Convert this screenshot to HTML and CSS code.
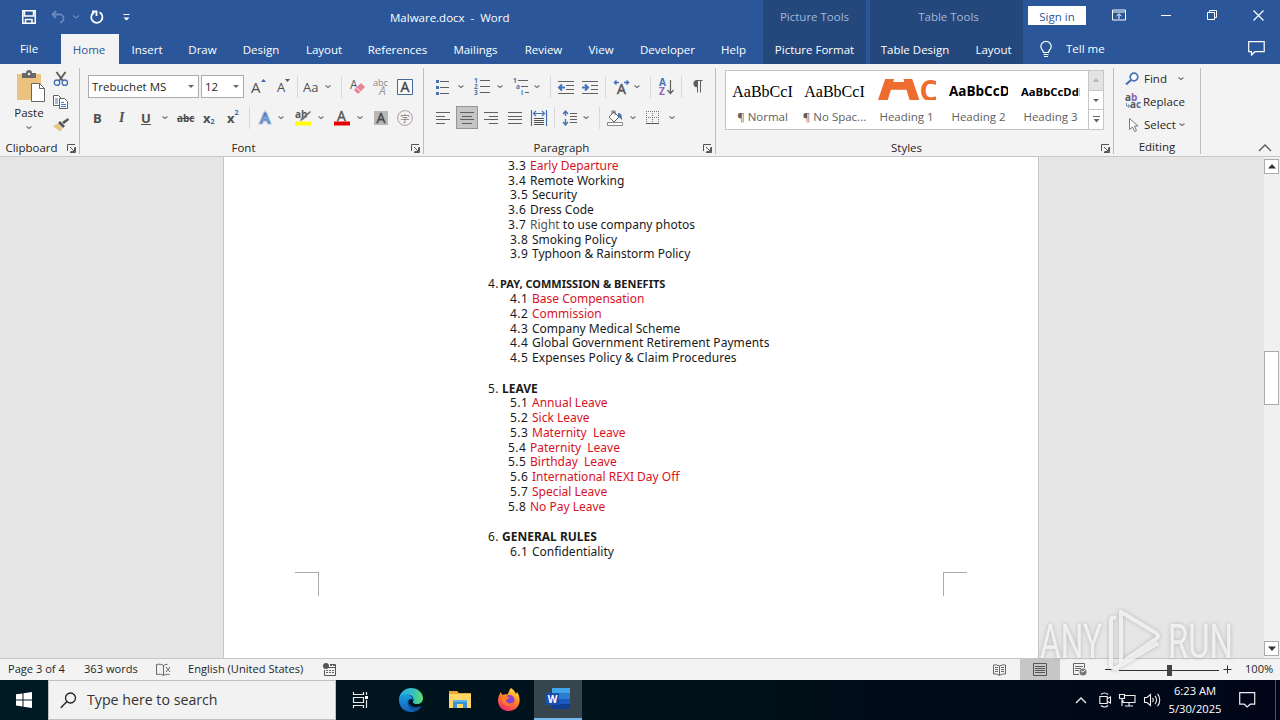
FILE: index.html
```html
<!DOCTYPE html>
<html lang="en">
<head>
    <meta charset="UTF-8">
    <title>Malware.docx - Word</title>
    <link rel="stylesheet" href="styles.css">
</head>
<body>
    <svg class="defs">
        <symbol id="chev" viewBox="0 0 8 6"><path d="M1.500 1.500l2.500 2 2.500-2" fill="none" stroke="#777" stroke-width="1.200"/></symbol>
        <symbol id="launch" viewBox="0 0 9 9"><path d="M.5 7V.5H8M3 3l4 4M7.5 3.5v4h-4M8.500 3v5.500H3" fill="none" stroke="#555"/></symbol>
    </svg>

    <header>
        <div class="head-main">
            <div class="titlebar">
                <svg width="14" height="14" viewBox="0 0 14 14"><path d="M.8.8h12.400v12.400H.8zM2.500 1v5h9V1M3.500 13V9.500h6.500V13" fill="none" stroke="#fff" stroke-width="1.500"/></svg>
                <svg class="faded" width="14" height="14" viewBox="0 0 14 14"><path d="M5 1L1.500 4.500 5 8M2 4.500h6a4 4 0 0 1 1 8" fill="none" stroke="#fff" stroke-width="1.800"/></svg>
                <svg class="faded" width="8" height="6"><path d="M1 1.500l3 2.500 3-2.500" fill="none" stroke="#fff" stroke-width="1.200"/></svg>
                <svg width="14" height="14" viewBox="0 0 14 14"><path d="M9.500 2.300A5.600 5.600 0 1 1 4 2.400M2 1.500h4.500V6" fill="none" stroke="#fff" stroke-width="1.800"/></svg>
                <svg width="7" height="7" viewBox="0 0 7 7"><path d="M.5 0h6v1h-6zM.5 3.500h6l-3 3z" fill="#fff"/></svg>
                <span class="doc-title">Malware.docx&nbsp; -&nbsp; Word</span>
            </div>
            <nav class="tabs">
                <a class="file">File</a>
                <a class="current">Home</a>
                <a>Insert</a>
                <a>Draw</a>
                <a>Design</a>
                <a>Layout</a>
                <a>References</a>
                <a>Mailings</a>
                <a>Review</a>
                <a>View</a>
                <a>Developer</a>
                <a>Help</a>
            </nav>
        </div>
        <div class="context">
            <div class="context-title">Picture Tools</div>
            <nav class="tabs one"><a>Picture Format</a></nav>
        </div>
        <div class="context">
            <div class="context-title">Table Tools</div>
            <nav class="tabs two"><a>Table Design</a><a>Layout</a></nav>
        </div>
        <div class="head-right">
            <div class="window-buttons">
                <span class="signin">Sign in</span>
                <svg width="14" height="12" viewBox="0 0 14 12"><path d="M.5 1h13v10H.5zM.5 3h13M7 10V5M4.500 7.200L7 4.700l2.500 2.500" fill="none" stroke="#fff"/></svg>
                <svg width="11" height="11"><path d="M0 5.500h10" stroke="#fff"/></svg>
                <svg width="11" height="11"><path d="M.5 2.500h7v7h-7zM2.500 2.500v-2h7v7h-2" fill="none" stroke="#fff"/></svg>
                <svg width="11" height="11"><path d="M.5.5l10 10M10.500.5l-10 10" stroke="#fff" stroke-width="1.200"/></svg>
            </div>
            <div class="tellme">
                <svg width="14" height="17" viewBox="0 0 14 17"><path d="M4.500 11.500C4.500 9 1.800 8.500 1.800 5.500a5 5 0 0 1 10.400 0c0 3-2.700 3.500-2.700 6zM4.500 13.500h5M5 15.500h4" fill="none" stroke="#fff" stroke-width="1.200"/></svg>
                <span>Tell me</span>
                <svg width="17" height="15" viewBox="0 0 17 15"><path d="M.7.7h15.500v10H7L3.500 14v-3.300H.7z" fill="none" stroke="#fff" stroke-width="1.200"/></svg>
            </div>
        </div>
    </header>

    <section class="ribbon">
        <div class="group clipboard">
            <div class="tools">
                <div class="paste">
                    <svg width="30" height="32" viewBox="0 0 30 32"><path d="M1 3h24v26H1z" fill="#eac282"/><path d="M6 2h4a3 3 0 0 1 6 0h4v5H6z" fill="#686868"/><circle cx="13" cy="3" r="1.200" fill="#fff"/><path d="M15.500 12.500h8l5 5v13h-13z" fill="#fff" stroke="#686868"/><path d="M23.500 12.500v5h5" fill="none" stroke="#686868"/></svg>
                    <span>Paste</span>
                    <svg width="8" height="6"><use href="#chev"/></svg>
                </div>
                <div class="clip-side">
                    <svg width="16" height="16" viewBox="0 0 16 16"><path d="M3.500 1l6.500 9M12.500 1L6 10" stroke="#606060" stroke-width="2"/><g fill="none" stroke="#3f6fb0" stroke-width="1.300"><circle cx="4" cy="11.700" r="2.700"/><circle cx="11.800" cy="11.700" r="2.700"/></g></svg>
                    <svg width="16" height="16" viewBox="0 0 16 16"><g fill="#fff" stroke="#606060"><path d="M.5 1.500h5l3 3v7h-8z"/><path d="M6.500 4.500h5l3 3v7h-8z"/></g><path d="M2 5h3M2 7h3M2 9h3M8 8.500h3M8 10.500h5M8 12.500h5" stroke="#4879b8"/></svg>
                    <svg width="16" height="16" viewBox="0 0 16 16"><path d="M15 1l1 2-5 4-2-2z" fill="#555"/><path d="M7 4l5 5-2 2-5-5z" fill="#555"/><path d="M4.500 6.500l5 5L7 14.500 0 9z" fill="#eac282"/></svg>
                </div>
            </div>
            <div class="label"><span>Clipboard</span><svg width="9" height="9"><use href="#launch"/></svg></div>
        </div>

        <div class="group font">
            <div class="tools">
                <div class="row font-top">
                    <div class="combo">Trebuchet MS<i></i></div>
                    <div class="combo small">12<i></i></div>
                    <span class="glyph big">A<svg width="5" height="3"><path d="M0 3l2.500-3L5 3z" fill="#4065a5"/></svg></span>
                    <span class="glyph mid">A<svg width="5" height="3"><path d="M0 0l2.500 3L5 0z" fill="#555"/></svg></span>
                    <b class="sep"></b>
                    <span class="glyph case">Aa</span>
                    <svg width="8" height="6"><use href="#chev"/></svg>
                    <b class="sep"></b>
                    <svg width="16" height="16" viewBox="0 0 16 16"><text x="0" y="10" font-size="12" fill="#555">A</text><path d="M11 4l4 4-7 7-4-4z" fill="#ee8295"/><path d="M6.500 8.500l4 4" stroke="#fff"/></svg>
                    <svg width="17" height="18" viewBox="0 0 17 18"><text x="0" y="8" font-size="9" fill="#888">abc</text><text x="6" y="17" font-size="12" font-style="italic" fill="#999">A</text></svg>
                    <svg width="16" height="16" viewBox="0 0 16 16"><path d="M.5.5h15v15H.5z" fill="#f8f8f8" stroke="#44699b"/><text x="8" y="13" font-size="14" text-anchor="middle" fill="#444" stroke="#444" stroke-width=".4">A</text></svg>
                </div>
                <div class="row font-bottom">
                    <span class="glyph bold">B</span>
                    <span class="glyph ital">I</span>
                    <span class="glyph under">U</span>
                    <svg width="8" height="6"><use href="#chev"/></svg>
                    <span class="glyph strike">abc</span>
                    <span class="glyph bold">x<sub>2</sub></span>
                    <span class="glyph bold">x<sup>2</sup></span>
                    <b class="sep"></b>
                    <svg width="16" height="16" viewBox="0 0 16 16"><text x="8" y="13" font-size="15" text-anchor="middle" fill="#fff" stroke="#b4cdec" stroke-width="3">A</text><text x="8" y="13" font-size="15" text-anchor="middle" fill="#fff" stroke="#4472b4" stroke-width=".8">A</text></svg>
                    <svg width="8" height="6"><use href="#chev"/></svg>
                    <svg width="17" height="17" viewBox="0 0 17 17"><text x="0" y="9" font-size="10" font-weight="bold" fill="#555">ab</text><path d="M15 2l1 1-8 8-3 1 1-3z" fill="#777"/><path d="M0 12.500h16v4H0z" fill="#ff0"/></svg>
                    <svg width="8" height="6"><use href="#chev"/></svg>
                    <svg width="17" height="17" viewBox="0 0 17 17"><text x="8.500" y="11.500" font-size="14" text-anchor="middle" fill="#555" stroke="#555" stroke-width=".4">A</text><path d="M1 12.500h16v4H1z" fill="#e80000"/></svg>
                    <svg width="8" height="6"><use href="#chev"/></svg>
                    <svg width="14" height="14" viewBox="0 0 14 14"><path d="M0 0h14v14H0z" fill="#b8b8b8"/><text x="7" y="12" font-size="14" text-anchor="middle" fill="#444" stroke="#444" stroke-width=".4">A</text></svg>
                    <svg width="16" height="16" viewBox="0 0 16 16"><circle cx="8" cy="8" r="7.400" fill="none" stroke="#aa9aac"/><text class="cjk" x="8" y="11.500" font-size="9.500" text-anchor="middle" fill="#888">字</text></svg>
                </div>
            </div>
            <div class="label"><span>Font</span><svg width="9" height="9"><use href="#launch"/></svg></div>
        </div>

        <div class="group para">
            <div class="tools">
                <div class="row para-top">
                    <svg width="16" height="16"><path d="M5 2.500h9M5 8.500h9M5 14.500h9" stroke="#606060"/><path d="M1 1h3v3H1zM1 7h3v3H1zM1 13h3v3H1z" fill="#4472b4"/></svg>
                    <svg width="8" height="6"><use href="#chev"/></svg>
                    <svg width="16" height="17"><path d="M6 2.500h10M6 8.500h10M6 14.500h10" stroke="#606060"/><g font-size="6.500" font-weight="bold" fill="#4472b4"><text x="0" y="5">1</text><text x="0" y="11">2</text><text x="0" y="17">3</text></g></svg>
                    <svg width="8" height="6"><use href="#chev"/></svg>
                    <svg width="18" height="17"><path d="M6 2.500h10M9 8.500h7M13 14.500h4" stroke="#606060"/><g font-size="6.500" font-weight="bold" fill="#4472b4"><text x="1" y="5">1</text><text x="4" y="11">a</text><text x="9" y="17">i</text></g></svg>
                    <svg width="8" height="6"><use href="#chev"/></svg>
                    <b class="sep"></b>
                    <svg width="17" height="14"><path d="M1 1.500h16M9 5.500h8M9 9.500h8M1 13.500h16" stroke="#606060"/><path d="M8 7.500H2M5 4.500l-3 3 3 3" fill="none" stroke="#4472b4" stroke-width="2"/></svg>
                    <svg width="17" height="14"><path d="M1 1.500h16M10 5.500h7M10 9.500h7M1 13.500h16" stroke="#606060"/><path d="M1 7.500h6M4 4.500l3 3-3 3" fill="none" stroke="#4472b4" stroke-width="2"/></svg>
                    <b class="sep"></b>
                    <svg width="17" height="14"><path d="M6 2.500H1M3.500.5l-2 2 2 2M11 2.500h5M13.500.5l2 2-2 2" fill="none" stroke="#4472b4" stroke-width="1.500"/><text x="8.500" y="13.500" font-size="14" text-anchor="middle" fill="#555" stroke="#555" stroke-width=".5">A</text></svg>
                    <svg width="8" height="6"><use href="#chev"/></svg>
                    <b class="sep"></b>
                    <svg width="16" height="18"><text x="0" y="8" font-size="10" font-weight="bold" fill="#4472b4">A</text><text x="0" y="17" font-size="10" font-weight="bold" fill="#9064b8">Z</text><path d="M11.500 2v13M8.500 12l3 3.500 3-3.500" fill="none" stroke="#606060" stroke-width="1.200"/></svg>
                    <b class="sep"></b>
                    <svg width="12" height="13"><path d="M5 .5h6.500M6.500.5v12M9.500.5v12" stroke="#606060"/><path d="M6 0a3.600 3.600 0 0 0 0 7.200z" fill="#606060"/></svg>
                </div>
                <div class="row para-bottom">
                    <svg width="16" height="12"><path d="M1 .5h14M1 4.500h9M1 7.500h14M1 11.500h9" stroke="#606060"/></svg>
                    <span class="pressed"><svg width="16" height="12"><path d="M1 .5h14M3 4.500h10M1 7.500h14M3 11.500h10" stroke="#606060"/></svg></span>
                    <svg width="16" height="12"><path d="M1 .5h14M6 4.500h9M1 7.500h14M6 11.500h9" stroke="#606060"/></svg>
                    <svg width="16" height="12"><path d="M1 .5h14M1 4.500h14M1 7.500h14M1 11.500h14" stroke="#606060"/></svg>
                    <svg width="17" height="16"><path d="M.5 0v16M15.500 0v16M3 3.500h10M5 1L2.500 3.500 5 6M11 1l2.500 2.500L11 6" fill="none" stroke="#4472b4" stroke-width="1.200"/><path d="M3 8.500h10M3 10.500h10M3 12.500h10M3 14.500h10" stroke="#505050"/></svg>
                    <b class="sep"></b>
                    <svg width="16" height="16"><path d="M3.500 1v5M3.500 9v6M1 4l2.500-3L6 4M1 12l2.500 3L6 12" fill="none" stroke="#4472b4" stroke-width="1.400"/><path d="M8 3.500h7M8 6.500h7M8 9.500h7M8 12.500h7" stroke="#606060"/></svg>
                    <svg width="8" height="6"><use href="#chev"/></svg>
                    <b class="sep"></b>
                    <svg width="18" height="16"><path d="M8 2l5 5-5 5-5-5zM6 4V1h3v4" fill="#fff" stroke="#606060"/><path d="M12 3c3 0 4 2 4 7l-4-4z" fill="#4472b4"/><path d="M1.500 12.500h15v3h-15z" fill="#fff" stroke="#888"/></svg>
                    <svg width="8" height="6"><use href="#chev"/></svg>
                    <svg width="14" height="14"><path d="M0 .5h13M.5 0v13M12.500 0v13M6.500 0v13M0 6.500h13" stroke="#777" stroke-dasharray="1 1"/><path d="M0 12.500h13" stroke="#555"/></svg>
                    <svg width="8" height="6"><use href="#chev"/></svg>
                </div>
            </div>
            <div class="label"><span>Paragraph</span><svg width="9" height="9"><use href="#launch"/></svg></div>
        </div>

        <div class="group styles">
            <div class="tools">
                <div class="gallery">
                    <div class="style"><div class="sample serif">AaBbCcI</div><span>¶ Normal</span></div>
                    <div class="style"><div class="sample serif">AaBbCcI</div><span>¶ No Spac...</span></div>
                    <div class="style"><div class="sample orange"><span class="o-a">A</span><span class="o-c">C</span></div><span>Heading 1</span></div>
                    <div class="style"><div class="sample heavy">AaBbCcD</div><span>Heading 2</span></div>
                    <div class="style"><div class="sample heavy less">AaBbCcDdE</div><span>Heading 3</span></div>
                    <div class="gallery-scroll">
                        <div class="off"><svg width="6" height="4"><path d="M0 4l3-4 3 4z" fill="#b5b5b5"/></svg></div>
                        <div><svg width="6" height="3"><path d="M0 0h6L3 3z" fill="#666"/></svg></div>
                        <div><svg width="7" height="7"><path d="M0 .5h7" stroke="#666"/><path d="M.5 3h6l-3 3.500z" fill="#666"/></svg></div>
                    </div>
                </div>
            </div>
            <div class="label"><span>Styles</span><svg width="9" height="9"><use href="#launch"/></svg></div>
        </div>

        <div class="group editing">
            <div class="tools">
                <div class="edit-row">
                    <svg width="16" height="14"><circle cx="9" cy="5" r="3.800" fill="#fff" stroke="#4472b4" stroke-width="1.700"/><path d="M6 8l-5 4.500" stroke="#4472b4" stroke-width="2.200"/></svg>
                    <span class="find">Find</span><svg width="8" height="6"><use href="#chev"/></svg>
                </div>
                <div class="edit-row replace">
                    <svg width="18" height="17"><text x="0" y="8" font-size="10" font-weight="bold" fill="#555">a<tspan fill="#8a60b0">b</tspan></text><text x="5" y="15" font-size="10" font-weight="bold" fill="#555">a<tspan fill="#4472b4">c</tspan></text><path d="M1.500 10v3h3M3 11.500l2 1.500-2 1.500" fill="none" stroke="#4472b4" stroke-width=".8"/></svg>
                    <span>Replace</span>
                </div>
                <div class="edit-row">
                    <svg width="16" height="16"><path d="M4.500 1.500v11l3-2.500 2 4.500 2-1-2-4.500h3.500z" fill="#fff" stroke="#777"/></svg>
                    <span class="select">Select</span><svg width="8" height="6"><use href="#chev"/></svg>
                </div>
            </div>
            <div class="label"><span>Editing</span></div>
        </div>
        <div class="collapse"><svg width="14" height="8"><path d="M1 7l6-6 6 6" fill="none" stroke="#555" stroke-width="1.300"/></svg></div>
    </section>

    <main>
        <div class="page">
            <ol class="contents">
                <li><i>3.3</i><em>Early Departure</em></li>
                <li><i>3.4</i>Remote Working</li>
                <li class="in"><i>3.5</i>Security</li>
                <li><i>3.6</i>Dress Code</li>
                <li><i>3.7</i><span class="soft">Right</span> to use company photos</li>
                <li class="in"><i>3.8</i>Smoking Policy</li>
                <li class="in"><i>3.9</i>Typhoon &amp; Rainstorm Policy</li>
                <li class="title pay"><i>4.</i><strong>PAY, COMMISSION &amp; BENEFITS</strong></li>
                <li class="in"><i>4.1</i><em>Base Compensation</em></li>
                <li class="in"><i>4.2</i><em>Commission</em></li>
                <li class="in"><i>4.3</i>Company Medical Scheme</li>
                <li class="in wide"><i>4.4</i>Global Government Retirement Payments</li>
                <li class="in wide"><i>4.5</i>Expenses Policy &amp; Claim Procedures</li>
                <li class="title"><i>5.</i><strong>LEAVE</strong></li>
                <li class="in"><i>5.1</i><em>Annual Leave</em></li>
                <li class="in"><i>5.2</i><em>Sick Leave</em></li>
                <li class="in"><i>5.3</i><em>Maternity&nbsp; Leave</em></li>
                <li><i>5.4</i><em>Paternity&nbsp; Leave</em></li>
                <li><i>5.5</i><em>Birthday&nbsp; Leave</em></li>
                <li class="in"><i>5.6</i><em>International REXI Day Off</em></li>
                <li class="in"><i>5.7</i><em>Special Leave</em></li>
                <li><i>5.8</i><em>No Pay Leave</em></li>
                <li class="title"><i>6.</i><strong>GENERAL RULES</strong></li>
                <li class="in"><i>6.1</i>Confidentiality</li>
            </ol>
            <div class="corners"><b></b><b></b></div>
        </div>
        <div class="scrollbar">
            <div class="arrow"><svg width="8" height="5"><path d="M0 4.500L4 0l4 4.500z" fill="#333"/></svg></div>
            <div class="thumb"></div>
            <div class="arrow"><svg width="8" height="5"><path d="M0 .5L4 5 8 .5z" fill="#333"/></svg></div>
        </div>
    </main>

    <div class="statusbar">
        <span class="s-page">Page 3 of 4</span>
        <span class="s-words">363 words</span>
        <svg class="s-proof" width="15" height="14"><path d="M7.500 2.500C5.500 1 3 1 .5 1.500v10c2.500-.5 5-.5 7 1zM7.500 2.500c1-.8 2.500-1.200 4-1.200M7.500 12.500c1.500-1 3-1.300 6-1M10 4l4 5M14 4l-4 5" fill="none" stroke="#666"/></svg>
        <span class="s-lang">English (United States)</span>
        <svg class="s-macro" width="13" height="13"><circle cx="3" cy="3" r="3" fill="#555"/><path d="M7 1.500h5.500v11h-11V7M1.500 4.500h11" fill="none" stroke="#555"/><path d="M3 7.500h8M3 9.500h8M7 2.500h5" stroke="#666" stroke-dasharray="2 1"/></svg>
        <div class="views">
            <svg class="v-read" width="13" height="12"><path d="M6.500 2C4.500.8 2.500.8.5 1v9c2-.2 4 0 6 1.500 2-1.500 4-1.700 6-1.500V1c-2-.2-4-.2-6 1zM6.500 2v9M2 3.500h3M2 5.500h3M2 7.500h3M8 3.500h3M8 5.500h3M8 7.500h3" fill="none" stroke="#666"/></svg>
            <span class="v-print"><svg width="14" height="13"><path d="M.5.5h13v12H.5zM2 3.500h10M2 5.500h10M2 7.500h10M2 9.500h10" fill="none" stroke="#555"/></svg></span>
            <svg class="v-web" width="14" height="13"><path d="M6 11.500H.5v-11h11V5M2 3.500h8M2 5.500h6M2 7.500h4" fill="none" stroke="#666"/><circle cx="10" cy="9" r="3.500" fill="#777"/><path d="M8 8l2 1 2-2" stroke="#eee" fill="none"/></svg>
            <svg class="zoom" width="127" height="12"><path d="M0 5.500h8M14 6.500h100M118.500 5.500h8M122.500 1.500v8" stroke="#333"/><path d="M62 1h5v11h-5z" fill="#444"/></svg>
            <span class="s-zoom">100%</span>
        </div>
    </div>

    <div class="taskbar">
        <div class="start"><svg width="16" height="16"><path d="M0 2.300l6.500-.9v6H0zM7.500 1.200L16 0v7.400H7.500zM0 8.500h6.500v6L0 13.600zM7.500 8.500H16V16l-8.500-1.200z" fill="#fff"/></svg></div>
        <div class="search">
            <svg width="17" height="17"><circle cx="10.500" cy="6" r="5" fill="none" stroke="#222" stroke-width="1.300"/><path d="M7 9.500L.8 15.800" stroke="#222" stroke-width="1.400"/></svg>
            <span>Type here to search</span>
        </div>
        <div class="app"><svg width="17" height="16"><path d="M1.500 0v2.500h10V0M1.500 5.500h10v5h-10zM1.500 16v-2.500h10V16M14.500 0v3M14.500 8v8" fill="none" stroke="#e8e8e8" stroke-width="1.200"/><path d="M13 4h3v3h-3z" fill="#fff"/></svg></div>
        <div class="app edge">
            <svg width="24" height="24" viewBox="0 0 24 24">
                <defs>
                    <linearGradient id="e1" x1="0" x2="1"><stop offset="0" stop-color="#2aa9e0"/><stop offset=".6" stop-color="#35c1c0"/><stop offset="1" stop-color="#66dd66"/></linearGradient>
                    <linearGradient id="e2" x1="0" y1="0" x2="0" y2="1"><stop offset="0" stop-color="#1b9de2"/><stop offset="1" stop-color="#1160b5"/></linearGradient>
                </defs>
                <path d="M0 11C1 4 6 0 12 0c7 0 12 5 12 10 0 4-3 6-6 6-3.500 0-4.500-1.500-4-2.500 1-1 1-5-3-6.500C7 6 2 7 0 11z" fill="url(#e1)"/>
                <path d="M0 12c0-4 4-6 8-5.500 4 .5 6 3 6 5-4-2-6 2-4 5 2 4 8 4 12 2-2 4-6 5.500-10 5.500C5 24 0 19 0 12z" fill="url(#e2)"/>
                <path d="M9.500 11c-3 5 1 11 6 12 3-.8 5.500-2.500 6.500-5-5 2.500-10.500 1-12-2.500-.7-1.500-.8-3-.5-4.500z" fill="#12509a"/>
            </svg>
        </div>
        <div class="app">
            <svg width="22" height="20" viewBox="0 0 22 20"><path d="M0 1h8l2 2h12v15H0z" fill="#e9a93a"/><path d="M0 4h22v14H0z" fill="#ffd766"/><path d="M4 10h14v8h-4v-4H8v4H4z" fill="#3c93d3"/><path d="M4 10h14v2H4z" fill="#5eb2e8"/></svg>
        </div>
        <div class="app fox">
            <svg width="24" height="24" viewBox="0 0 24 24">
                <defs>
                    <linearGradient id="f1" x1=".8" y1="0" x2=".3" y2="1"><stop offset="0" stop-color="#ffe94a"/><stop offset=".45" stop-color="#ff8a22"/><stop offset="1" stop-color="#f0286a"/></linearGradient>
                </defs>
                <path d="M14 0c3 2 4 4 5 6l1-2c2 3 3 6 2.500 10-.7 5-5 9-10.500 9C5.500 23 .8 18.500 1 12c0-3 1.500-5 2.500-8l2 3c1.500-1 3.500-1 5-.5C12 4 12 2 14 0z" fill="url(#f1)"/>
                <circle cx="12.500" cy="12" r="5" fill="#8540d8"/><path d="M5 9c3-2 5 0 8 0-1 2-4 2-4 4 1 3 5 3 8 1-1 4-10 6-12-1z" fill="#ff7b26"/>
            </svg>
        </div>
        <div class="app active">
            <svg width="24" height="22" viewBox="0 0 24 22"><path d="M6 0h18v5.500H6z" fill="#41a5ee"/><path d="M6 5.500h18V11H6z" fill="#2b7cd3"/><path d="M6 11h18v5H6z" fill="#185abd"/><path d="M6 16h18v5H6z" fill="#103f91"/><path d="M0 5h13v12H0z" fill="#174fac"/><text x="6.500" y="14.500" font-size="10" font-weight="bold" text-anchor="middle" fill="#fff">W</text></svg>
        </div>
        <div class="tray">
            <svg width="12" height="8"><path d="M1 7l5-5 5 5" fill="none" stroke="#eee" stroke-width="1.300"/></svg>
            <svg width="12" height="16"><path d="M.8 4.500h7.400v7H.8zM8.500 6.500l3-1.500v6l-3-1.500M2 2.500c2-2 5-2 7 0M2 13.500c2 2 5 2 7 0" fill="none" stroke="#eee" stroke-width="1.100"/></svg>
            <svg width="17" height="14"><path d="M6 2.500h10v7H4V7M10 9.500V13M6 13h8M.5 1.500h5v4h-5zM3 5.500V13" fill="none" stroke="#eee" stroke-width="1.100"/></svg>
            <svg width="17" height="14"><path d="M.5 4.500h2.500l3.500-3v11L3 9.500H.5zM8.500 5c1 1 1 3 0 4M11 3c2 2 2 6 0 8M13.500 1c3 3 3 9 0 12" fill="none" stroke="#eee" stroke-width="1.100"/></svg>
            <div class="clock">6:23 AM<br>5/30/2025</div>
            <svg width="17" height="16"><path d="M.7.7h15v11.500h-4.500L8.200 15l-3-2.800H.7z" fill="none" stroke="#eee" stroke-width="1.200"/></svg>
            <b></b>
        </div>
    </div>

    <svg class="watermark" width="200" height="72" viewBox="0 0 200 72">
        <g fill="#fff" fill-opacity=".7">
            <text x="4" y="55" font-size="49" textLength="62" lengthAdjust="spacingAndGlyphs">ANY</text>
            <text x="132" y="55" font-size="49" textLength="65" lengthAdjust="spacingAndGlyphs">RUN</text>
        </g>
        <path d="M85 9l35 21q4 3 0 6L85 60zM80 15q-5-2-5 3v44q1 5 5 3l42-25" fill="none" stroke="#fff" stroke-opacity=".7" stroke-width="4" stroke-linejoin="round"/>
    </svg>
</body>
</html>
```
FILE: styles.css
```css
body {
    margin: 0;
    width: 1280px;
    height: 720px;
    overflow: hidden;
    display: flex;
    flex-direction: column;
    position: relative;
    font-family: 'Open Sans', 'Noto Sans CJK SC', sans-serif;
    font-size: 11.5px;
    line-height: 16px;
    color: #262626;
    background: #e6e6e6;
}
svg {
    display: block;
    flex: none;
    overflow: visible;
}
.defs {
    position: absolute;
    width: 0;
    height: 0;
}
.cjk {
    font-family: 'Noto Sans CJK SC', sans-serif;
}

/* title bar and tabs */
header {
    height: 64px;
    display: grid;
    grid-template-columns: 763px 103px 153px 1fr;
    background: #2b579a;
    color: #fff;
}
.titlebar {
    height: 34px;
    display: flex;
    align-items: center;
    padding-left: 22px;
}
.titlebar svg:nth-child(2) {
    margin-left: 15px;
}
.titlebar svg:nth-child(3) {
    margin-left: 7px;
}
.titlebar svg:nth-child(4) {
    margin-left: 10px;
}
.titlebar svg:nth-child(5) {
    margin-left: 19px;
}
.faded {
    opacity: .3;
}
.doc-title {
    margin: 2px 0 0 260px;
    white-space: nowrap;
}
.tabs {
    display: grid;
    grid-template-columns: 61px 58px 56px 55px 62px 64px 83px 73px 63px 52px 81px 51px;
    height: 30px;
}
.tabs a {
    display: flex;
    align-items: center;
    justify-content: center;
    padding-top: 2px;
    white-space: nowrap;
}
.tabs .file {
    padding: 0 3px 0 0;
}
.tabs .current {
    padding-right: 2px;
    margin-right: -1px;
    background: #f3f3f3;
    color: #2b579a;
}
.tabs .current {
    margin-right: 0;
}
.tabs.one {
    grid-template-columns: 103px;
}
.tabs.two {
    grid-template-columns: 90px 67px;
}
.context {
    background: #24477c;
}
.context + .context {
    margin: 0 -4px 0 4px;
}
.context-title {
    height: 34px;
    line-height: 33px;
    text-align: center;
    color: #a5b9da;
}
.context + .context .context-title {
    padding-left: 4px;
}
.window-buttons {
    height: 34px;
    display: flex;
    align-items: center;
    padding-left: 9px;
    margin-top: -2px;
}
.signin {
    width: 58px;
    height: 19px;
    line-height: 21px;
    background: #fff;
    color: #2b579a;
    text-align: center;
    margin-right: 26px;
}
.window-buttons svg {
    margin-right: 35px;
}
.window-buttons svg:last-child {
    margin: 0;
}
.tellme {
    display: flex;
    align-items: center;
    height: 34px;
    padding-left: 20px;
}
.tellme span {
    width: 182px;
    margin-left: 13px;
}
.tellme svg:last-child {
    margin-top: -1px;
}

/* ribbon */
.ribbon {
    height: 92px;
    display: flex;
    background: #f3f3f3;
    border-bottom: 1px solid #c6c6c6;
}
.group {
    box-sizing: border-box;
    height: 86px;
    margin-top: 4px;
    border-right: 1px solid #bdbdbd;
}
.tools {
    height: 72px;
}
.label {
    display: flex;
    align-items: center;
    height: 16px;
    padding-right: 3px;
}
.label span {
    flex: 1;
    text-align: center;
    padding-right: 4px;
}
.clipboard {
    width: 80px;
}
.clipboard .tools {
    display: flex;
}
.font {
    width: 344px;
}
.para {
    width: 292px;
}
.styles {
    width: 398px;
}
.editing {
    width: 87px;
}
.editing .label span {
    padding: 0 0 0 3px;
}
.paste {
    width: 58px;
    display: flex;
    flex-direction: column;
    align-items: center;
    padding-top: 3px;
}
.paste svg:first-child {
    margin-left: 4px;
}
.paste span {
    margin: 2px 0 4px;
}
.clip-side {
    display: flex;
    flex-direction: column;
    gap: 7px;
    padding-top: 3px;
    margin-left: -5px;
}
.row {
    display: grid;
    align-items: center;
    height: 23px;
}
.font .row {
    margin-left: 8px;
}
.para .row {
    margin-left: 11px;
}
.font-top,
.para-top {
    padding-top: 7px;
}
.font-bottom,
.para-bottom {
    padding-top: 8px;
}
.font-top {
    grid-template-columns: 113px 50px 24px 22px 6px 21px 17px 9px 23px 24px 18px;
}
.font-bottom {
    padding-left: 5px;
    grid-template-columns: 24px 24px 20px 16px 26px 24px 22px 8px 20px 18px 22px 16px 23px 18px 23px 18px;
}
.para-top {
    grid-template-columns: 22px 17px 22px 16px 21px 17px 7px 24px 24px 8px 20px 17px 9px 22px 10px 16px;
}
.para-bottom {
    grid-template-columns: 21px 27px 24px 24px 23px 8px 20px 17px 7px 23px 17px 22px 10px;
}
.sep {
    width: 1px;
    height: 22px;
    background: #d8d8d8;
}
.combo {
    box-sizing: border-box;
    width: 111px;
    height: 23px;
    display: flex;
    align-items: center;
    justify-content: space-between;
    padding: 0 4px 0 3px;
    border: 1px solid #ababab;
    background: #fff;
}
.combo.small {
    width: 43px;
}
.combo i {
    border: 3px solid transparent;
    border-top-color: #666;
    border-bottom: 0;
}
.glyph {
    display: flex;
    align-items: center;
    color: #505050;
    white-space: nowrap;
}
.glyph svg {
    margin-bottom: 12px;
}
.glyph.big {
    font-size: 15px;
}
.glyph.mid {
    font-size: 13px;
    padding-left: 2px;
}
.glyph.case {
    font-size: 13px;
}
.glyph.bold,
.glyph.under {
    font-weight: bold;
    font-size: 13px;
}
.glyph.under {
    text-decoration: underline;
}
.glyph.ital {
    font: italic bold 14px 'Liberation Serif', serif;
    padding-left: 2px;
}
.glyph.strike {
    font-size: 10px;
    font-weight: bold;
    text-decoration: line-through;
}
.glyph sub,
.glyph sup {
    font-size: 7px;
    line-height: 8px;
    color: #4065a5;
}
.glyph sub {
    margin-top: 9px;
}
.glyph sup {
    margin-bottom: 9px;
}
.pressed {
    box-sizing: border-box;
    width: 22px;
    height: 23px;
    padding: 5px 2px;
    background: #c5c5c5;
    border: 1px solid #969696;
}

/* style gallery */
.gallery {
    box-sizing: border-box;
    display: flex;
    width: 379px;
    height: 60px;
    margin-left: 9px;
    border: 1px solid #c6c6c6;
    background: #fff;
    position: relative;
    top: 2px;
}
.style {
    width: 71px;
    padding-left: 1px;
    text-align: center;
    color: #606060;
    white-space: nowrap;
}
.sample {
    height: 38px;
    line-height: 41px;
    margin: 0 6px;
    overflow: hidden;
    color: #000;
}
.serif {
    font-family: 'Liberation Serif', serif;
    font-size: 16px;
    margin: 0 2px;
}
.heavy {
    font-size: 13.5px;
    font-weight: bold;
    text-align: left;
}
.less {
    font-size: 11.3px;
}
.orange {
    display: flex;
    width: 58px;
    height: 21px;
    margin: 8px 6px 9px 7px;
    font-weight: bold;
    color: #ee6c2d;
}
.o-a {
    width: 43px;
    margin-top: -7px;
    font-size: 60px;
    line-height: 10px;
}
.o-c {
    font-size: 29px;
    line-height: 21px;
}
.gallery-scroll {
    width: 14px;
    margin-left: auto;
    border-left: 1px solid #c6c6c6;
    display: flex;
    flex-direction: column;
}
.gallery-scroll div {
    flex: 1;
    display: flex;
    align-items: center;
    justify-content: center;
    border-bottom: 1px solid #c6c6c6;
}
.gallery-scroll div:last-child {
    border: 0;
}
.gallery-scroll .off {
    background: #e3e3e3;
}
.edit-row {
    display: flex;
    align-items: center;
    height: 23px;
    margin-top: -1px;
    margin-bottom: 1px;
    padding-left: 11px;
}
.edit-row span {
    margin: 0 4px 0 3px;
}
.edit-row.replace span {
    margin-left: 0;
}
.edit-row .find {
    margin-right: 10px;
}
.edit-row .select {
    margin-right: 2px;
}
.collapse {
    margin: 80px 0 0 57px;
}

/* document */
main {
    height: 501px;
    display: flex;
    overflow: hidden;
}
.page {
    box-sizing: border-box;
    width: 816px;
    height: 502px;
    margin-left: 223px;
    background: #fff;
    border: 1px solid #c6c6c6;
    border-width: 0 1px;
}
.contents {
    box-sizing: border-box;
    height: 415px;
    margin: 0;
    padding: 2px 0 0 284px;
    list-style: none;
    font-family: 'Noto Sans', sans-serif;
    font-size: 12px;
    line-height: 14.73px;
    color: #1a1a1a;
    white-space: nowrap;
}
.contents li.in {
    padding-left: 2px;
}
.contents li.wide {
    letter-spacing: .07px;
}
.contents i {
    display: inline-block;
    width: 22px;
    font-style: normal;
    letter-spacing: .5px;
}
.contents em {
    font-style: normal;
    color: #d8121f;
}
.soft {
    color: #555;
}
.contents .title {
    margin: 15.8px 0 0 -20px;
}
.contents .title i {
    width: 14px;
}
.contents .pay i {
    width: 12px;
}
.contents .title.pay {
    margin-top: 15.3px;
}
.contents .pay strong {
    font-size: 11px;
}
.corners {
    display: flex;
    justify-content: space-between;
    margin: 0 71px 0 71px;
}
.corners b {
    width: 23px;
    height: 23px;
    border-top: 1px solid #aaa;
    border-right: 1px solid #aaa;
}
.corners b + b {
    border-right: 0;
    border-left: 1px solid #aaa;
}
.scrollbar {
    box-sizing: border-box;
    width: 16px;
    margin-left: auto;
    background: #f0f0f0;
    display: flex;
    flex-direction: column;
    justify-content: space-between;
    padding: 2px 0;
}
.arrow,
.thumb {
    box-sizing: border-box;
    width: 15px;
    height: 15px;
    border: 1px solid #ababab;
    background: #fff;
    display: flex;
    align-items: center;
    justify-content: center;
}
.thumb {
    height: 54px;
    margin-bottom: 60px;
}

/* status bar */
.statusbar {
    box-sizing: border-box;
    height: 22px;
    display: flex;
    align-items: center;
    background: #f3f3f3;
    border-top: 1px solid #c6c6c6;
    font-size: 11.1px;
    white-space: nowrap;
}
.statusbar > span {
    margin-top: -1px;
}
.s-page {
    width: 76px;
    padding-left: 8px;
}
.s-words {
    width: 72px;
}
.s-lang {
    width: 135px;
    margin-left: 17px;
}
.views {
    display: flex;
    align-items: center;
    margin-left: auto;
}
.v-print {
    display: flex;
    align-items: center;
    justify-content: center;
    width: 40px;
    height: 21px;
    margin: 0 13px 0 14px;
    background: #c6c6c6;
}
.zoom {
    margin-left: 18px;
}
.s-zoom {
    width: 35px;
    margin: -1px 0 0 13px;
}

/* taskbar */
.taskbar {
    height: 40px;
    display: flex;
    align-items: center;
    background: linear-gradient(to right, #001a24, #001019 55%, #000618);
    color: #fff;
}
.start,
.app {
    width: 48px;
    height: 40px;
    display: flex;
    align-items: center;
    justify-content: center;
}
.app {
    margin-right: 1px;
}
.app.active {
    box-sizing: border-box;
    background: #36454e;
    border-bottom: 2px solid #76b9ed;
}
.search {
    box-sizing: border-box;
    width: 288px;
    height: 40px;
    display: flex;
    align-items: center;
    gap: 10px;
    padding-left: 11px;
    border: 1px solid #c0c0c0;
    background: #f2f2f2;
    color: #333;
    font-size: 14.2px;
}
.search + .app {
    margin-right: 3px;
}
.tray {
    display: flex;
    align-items: center;
    margin-left: auto;
}
.tray svg {
    margin-right: 12px;
}
.tray svg:nth-child(2),
.tray svg:nth-child(3) {
    margin-right: 8px;
}
.clock {
    width: 60px;
    margin: 0 14px 0 -8px;
    font-size: 11.2px;
    line-height: 18px;
    text-align: center;
}
.tray b {
    width: 1px;
    height: 40px;
    margin: 0 4px 0 7px;
    background: #4a5260;
}

.watermark {
    position: absolute;
    left: 1036px;
    top: 603px;
    font-family: Roboto, sans-serif;
    filter: drop-shadow(0 0 2px rgba(0, 0, 0, .3));
}
```
